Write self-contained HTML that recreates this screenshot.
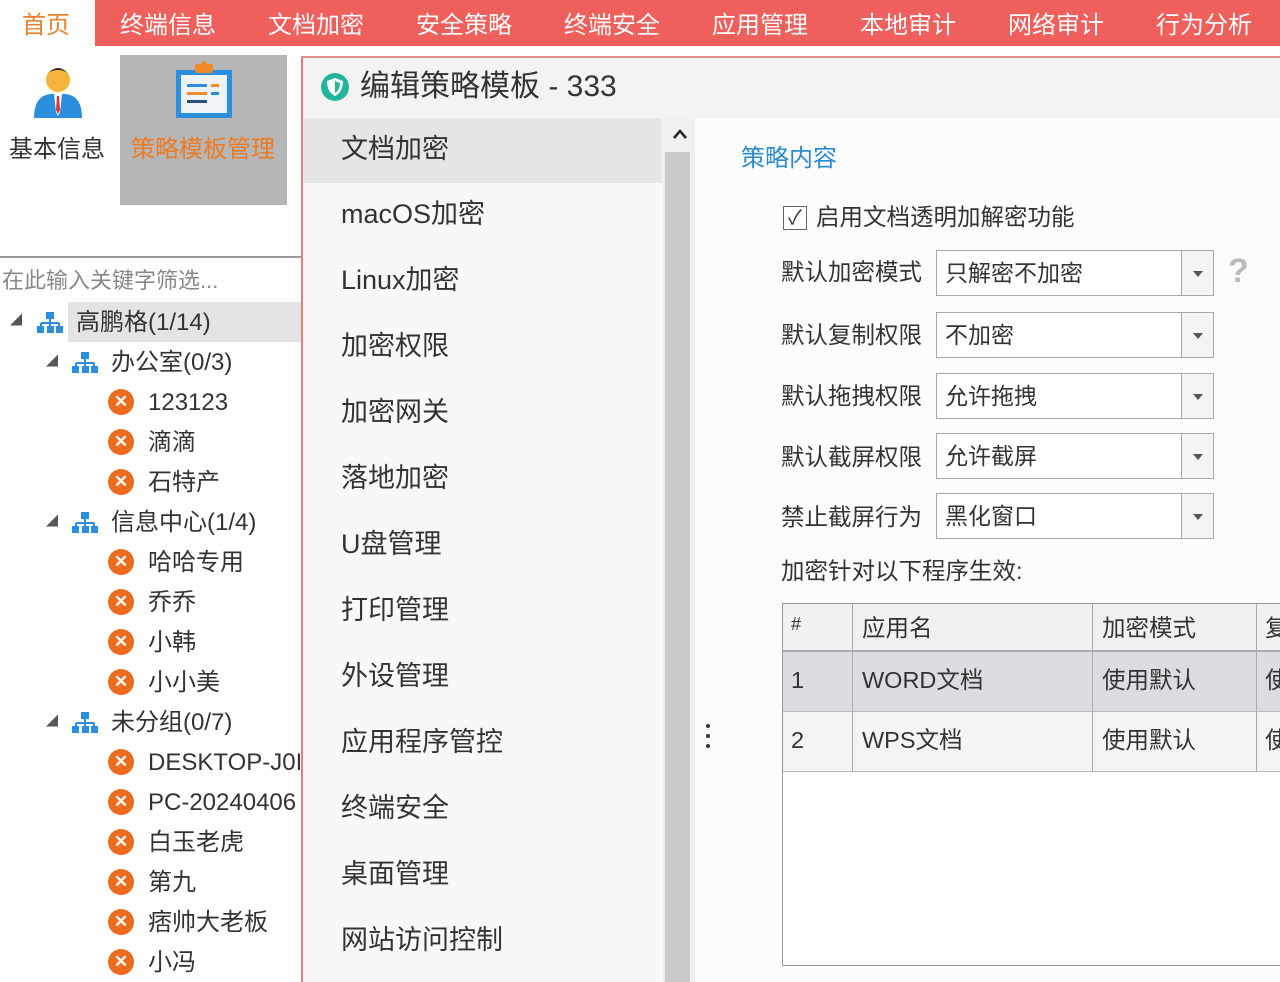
<!DOCTYPE html>
<html><head><meta charset="utf-8"><style>
*{margin:0;padding:0;box-sizing:border-box}
body{width:1280px;height:982px;overflow:hidden;background:#fff;font-family:"Liberation Sans","Noto Sans CJK SC",sans-serif;color:#333;position:relative}
.a{position:absolute;white-space:nowrap;line-height:1.15}
.nav{left:0;top:0;width:1280px;height:46px;background:#ef5f5b}
.tab{top:12px;font-size:24px;color:#fff;width:148px;text-align:center}
.tree{font-size:24px;color:#333}
.xi{width:26px;height:26px;border-radius:50%;background:#ec6b1e;color:#fff;font-size:17px;font-weight:bold;text-align:center;line-height:26px}
.mi{left:341px;font-size:27px;color:#333}
.lbl{left:781px;font-size:23.5px;color:#333}
.sel{left:936px;width:278px;height:46px;border:1px solid #a8a8a8;background:#fff}
.sel span{position:absolute;left:8px;top:9px;font-size:23px;line-height:1.15}
.sel i{position:absolute;right:0;top:0;width:32px;height:44px;border-left:1px solid #a8a8a8;background:#f4f4f4}
.sel i:after{content:"";position:absolute;left:11px;top:20px;border:5px solid transparent;border-top:6px solid #555}
</style></head><body>
<div class="a nav"></div>
<div class="a" style="left:0;top:0;width:95px;height:46px;background:#fff"></div>
<div class="a tab" style="left:0;width:92px;color:#e8822f">首页</div>
<div class="a tab" style="left:94px">终端信息</div>
<div class="a tab" style="left:242px">文档加密</div>
<div class="a tab" style="left:390px">安全策略</div>
<div class="a tab" style="left:538px">终端安全</div>
<div class="a tab" style="left:686px">应用管理</div>
<div class="a tab" style="left:834px">本地审计</div>
<div class="a tab" style="left:982px">网络审计</div>
<div class="a tab" style="left:1130px">行为分析</div>

<svg class="a" style="left:30px;top:62px" width="56" height="58" viewBox="0 0 56 58">
<circle cx="28" cy="18" r="12" fill="#f5b53a"/><path d="M16 14 Q28 -2 40 14 Q36 8 28 8 Q20 8 16 14Z" fill="#333"/>
<path d="M4 56 Q4 34 20 32 L36 32 Q52 34 52 56Z" fill="#2c8fde"/><path d="M24 32 L32 32 L30 50 L28 54 L26 50Z" fill="#fff"/><path d="M27 34 L29 34 L30 48 L28 52 L26 48Z" fill="#d33"/></svg>
<div class="a" style="left:9px;top:136px;font-size:24px">基本信息</div>
<div class="a" style="left:120px;top:55px;width:167px;height:150px;background:#b6b6b6"></div>
<svg class="a" style="left:173px;top:60px" width="62" height="60" viewBox="0 0 62 60">
<rect x="3" y="10" width="56" height="48" fill="#2c8fde"/><rect x="8" y="15" width="46" height="38" fill="#eef3f8"/>
<rect x="22" y="4" width="18" height="9" rx="2" fill="#f08a2a"/><circle cx="31" cy="4" r="3" fill="#f08a2a"/>
<rect x="14" y="24" width="20" height="3" fill="#2c8fde"/><rect x="38" y="24" width="8" height="3" fill="#f08a2a"/>
<rect x="14" y="32" width="20" height="3" fill="#f08a2a"/><rect x="38" y="32" width="8" height="3" fill="#2c8fde"/>
<rect x="14" y="40" width="20" height="3" fill="#2c4f7e"/></svg>
<div class="a" style="left:131px;top:136px;font-size:24px;color:#ee7a24">策略模板管理</div>

<div class="a" style="left:0;top:256px;width:301px;height:2px;background:#9a9a9a"></div>
<div class="a" style="left:2px;top:268px;font-size:22px;color:#888">在此输入关键字筛选...</div>
<div class="a" style="left:68px;top:302px;width:233px;height:40px;background:#e4e4e4"></div>

<div class="a" style="left:301px;top:56px;width:2px;height:926px;background:#e07f7f"></div>
<div class="a" style="left:301px;top:56px;width:979px;height:2px;background:#e48d8d"></div>

<svg width="0" height="0" style="position:absolute"><defs><g id="org"><rect x="9" y="0" width="8" height="7" fill="#2c8fde"/><path d="M13 7V11M4 11H22M4 11V14M13 11V14M22 11V14" stroke="#2c8fde" stroke-width="2" fill="none"/><rect x="0" y="14" width="7" height="7" fill="#2c8fde"/><rect x="10" y="14" width="7" height="7" fill="#2c8fde"/><rect x="19" y="14" width="7" height="7" fill="#2c8fde"/></g></defs></svg>
<div class="a" style="left:10px;top:314px;font-size:12px;color:#555">◢</div>
<svg class="a" style="left:37px;top:312px" width="26" height="22"><use href="#org"/></svg>
<div class="a tree" style="left:76px;top:309px">高鹏格(1/14)</div>

<div class="a" style="left:46px;top:355px;font-size:12px;color:#555">◢</div>
<svg class="a" style="left:72px;top:352px" width="26" height="22"><use href="#org"/></svg>
<div class="a tree" style="left:111px;top:349px">办公室(0/3)</div>
<div class="a xi" style="left:108px;top:389px">✕</div><div class="a tree" style="left:148px;top:389px">123123</div>
<div class="a xi" style="left:108px;top:429px">✕</div><div class="a tree" style="left:148px;top:429px">滴滴</div>
<div class="a xi" style="left:108px;top:469px">✕</div><div class="a tree" style="left:148px;top:469px">石特产</div>

<div class="a" style="left:46px;top:515px;font-size:12px;color:#555">◢</div>
<svg class="a" style="left:72px;top:512px" width="26" height="22"><use href="#org"/></svg>
<div class="a tree" style="left:111px;top:509px">信息中心(1/4)</div>
<div class="a xi" style="left:108px;top:549px">✕</div><div class="a tree" style="left:148px;top:549px">哈哈专用</div>
<div class="a xi" style="left:108px;top:589px">✕</div><div class="a tree" style="left:148px;top:589px">乔乔</div>
<div class="a xi" style="left:108px;top:629px">✕</div><div class="a tree" style="left:148px;top:629px">小韩</div>
<div class="a xi" style="left:108px;top:669px">✕</div><div class="a tree" style="left:148px;top:669px">小小美</div>

<div class="a" style="left:46px;top:715px;font-size:12px;color:#555">◢</div>
<svg class="a" style="left:72px;top:712px" width="26" height="22"><use href="#org"/></svg>
<div class="a tree" style="left:111px;top:709px">未分组(0/7)</div>
<div style="position:absolute;left:0;top:0;width:300px;height:982px;overflow:hidden">
<div class="a xi" style="left:108px;top:749px">✕</div><div class="a tree" style="left:148px;top:749px">DESKTOP-J0IS</div>
<div class="a xi" style="left:108px;top:789px">✕</div><div class="a tree" style="left:148px;top:789px">PC-20240406</div>
</div>
<div class="a xi" style="left:108px;top:829px">✕</div><div class="a tree" style="left:148px;top:829px">白玉老虎</div>
<div class="a xi" style="left:108px;top:869px">✕</div><div class="a tree" style="left:148px;top:869px">第九</div>
<div class="a xi" style="left:108px;top:909px">✕</div><div class="a tree" style="left:148px;top:909px">痞帅大老板</div>
<div class="a xi" style="left:108px;top:949px">✕</div><div class="a tree" style="left:148px;top:949px">小冯</div>

<div class="a" style="left:303px;top:58px;width:977px;height:60px;background:#f3f3f3"></div>
<svg class="a" style="left:320px;top:72px" width="30" height="30" viewBox="0 0 30 30"><circle cx="15" cy="15" r="14" fill="#22b59a"/><path d="M15 6 L23 9 Q23 20 15 24 Q7 20 7 9Z" fill="#fff"/><path d="M15 9 L20 11 Q20 18 15 21Z" fill="#22b59a"/></svg>
<div class="a" style="left:360px;top:70px;font-size:30px;color:#333">编辑策略模板 - 333</div>

<div class="a" style="left:303px;top:118px;width:362px;height:864px;background:#f8f8f8"></div>
<div class="a" style="left:303px;top:118px;width:359px;height:65px;background:#e6e6e6"></div>
<div class="a mi" style="top:134px">文档加密</div>
<div class="a mi" style="top:199px">macOS加密</div>
<div class="a mi" style="top:265px">Linux加密</div>
<div class="a mi" style="top:331px">加密权限</div>
<div class="a mi" style="top:397px">加密网关</div>
<div class="a mi" style="top:463px">落地加密</div>
<div class="a mi" style="top:529px">U盘管理</div>
<div class="a mi" style="top:595px">打印管理</div>
<div class="a mi" style="top:661px">外设管理</div>
<div class="a mi" style="top:727px">应用程序管控</div>
<div class="a mi" style="top:793px">终端安全</div>
<div class="a mi" style="top:859px">桌面管理</div>
<div class="a mi" style="top:925px">网站访问控制</div>

<div class="a" style="left:663px;top:118px;width:32px;height:864px;background:#f0f0f0"></div>
<div class="a" style="left:665px;top:152px;width:25px;height:830px;background:#cbcbcb"></div>
<svg class="a" style="left:672px;top:128px" width="16" height="12"><path d="M2 10 L8 3 L14 10" stroke="#222" stroke-width="2.5" fill="none"/></svg>

<div class="a" style="left:695px;top:118px;width:585px;height:864px;background:#fcfcfd"></div>
<div class="a" style="left:706px;top:724px;width:4px;height:4px;border-radius:2px;background:#333;box-shadow:0 10px #333,0 20px #333"></div>
<div class="a" style="left:741px;top:145px;font-size:24px;color:#2a8bd0">策略内容</div>
<div class="a" style="left:783px;top:206px;width:24px;height:24px;border:1px solid #666;background:#fff;font-size:20px;line-height:22px;text-align:center;color:#333">✓</div>
<div class="a lbl" style="left:816px;top:204px">启用文档透明加解密功能</div>

<div class="a lbl" style="top:259px">默认加密模式</div>
<div class="a sel" style="top:250px"><span>只解密不加密</span><i></i></div>
<div class="a" style="left:1228px;top:252px;font-size:34px;color:#bbb;font-weight:bold">?</div>
<div class="a lbl" style="top:322px">默认复制权限</div>
<div class="a sel" style="top:312px"><span>不加密</span><i></i></div>
<div class="a lbl" style="top:383px">默认拖拽权限</div>
<div class="a sel" style="top:373px"><span>允许拖拽</span><i></i></div>
<div class="a lbl" style="top:444px">默认截屏权限</div>
<div class="a sel" style="top:433px"><span>允许截屏</span><i></i></div>
<div class="a lbl" style="top:504px">禁止截屏行为</div>
<div class="a sel" style="top:493px"><span>黑化窗口</span><i></i></div>
<div class="a lbl" style="top:558px">加密针对以下程序生效:</div>

<div class="a" style="left:782px;top:603px;width:500px;height:363px;border:1px solid #999;background:#fdfdfe"></div>
<div class="a" style="left:783px;top:604px;width:497px;height:48px;background:#f0f1f3;border-bottom:2px solid #aaa"></div>
<div class="a" style="left:783px;top:652px;width:497px;height:60px;background:#dcdde0;border-bottom:1px solid #bbb"></div>
<div class="a" style="left:783px;top:712px;width:497px;height:60px;background:#f3f4f6;border-bottom:1px solid #bbb"></div>
<div class="a" style="left:852px;top:604px;width:1px;height:168px;background:#aaa"></div>
<div class="a" style="left:1092px;top:604px;width:1px;height:168px;background:#aaa"></div>
<div class="a" style="left:1256px;top:604px;width:1px;height:168px;background:#aaa"></div>
<div class="a" style="left:791px;top:614px;font-size:18px">#</div>
<div class="a lbl" style="left:862px;top:615px">应用名</div>
<div class="a lbl" style="left:1102px;top:615px">加密模式</div>
<div class="a lbl" style="left:1265px;top:615px">复</div>
<div class="a lbl" style="left:791px;top:667px">1</div>
<div class="a lbl" style="left:862px;top:667px">WORD文档</div>
<div class="a lbl" style="left:1102px;top:667px">使用默认</div>
<div class="a lbl" style="left:1265px;top:667px">使</div>
<div class="a lbl" style="left:791px;top:727px">2</div>
<div class="a lbl" style="left:862px;top:727px">WPS文档</div>
<div class="a lbl" style="left:1102px;top:727px">使用默认</div>
<div class="a lbl" style="left:1265px;top:727px">使</div>
</body></html>
